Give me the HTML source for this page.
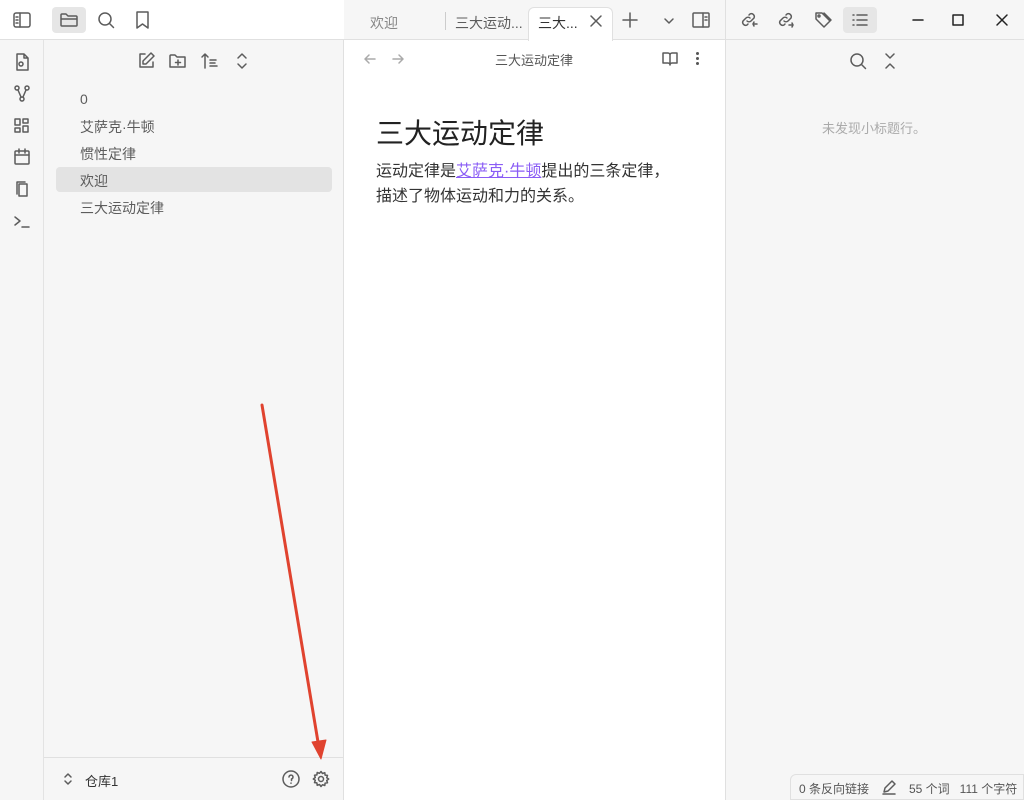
<!DOCTYPE html>
<html><head><meta charset="utf-8"><style>
*{box-sizing:border-box;margin:0;padding:0}
body{width:1024px;height:800px;overflow:hidden;position:relative;background:#fff;font-family:"Liberation Sans","Noto Sans CJK SC",sans-serif;color:#222}
.abs{position:absolute}
svg{position:absolute;fill:none;stroke:#5c5c5c;stroke-width:1.5;stroke-linecap:round;stroke-linejoin:round}
.t{font-size:14px;color:#5c5c5c;position:absolute}
</style></head><body>
<div class="abs" style="left:0;top:0;width:344px;height:40px;background:#fff;border-bottom:1px solid #e0e0e0"></div>
<div class="abs" style="left:0;top:40px;width:44px;height:760px;background:#f6f6f6;border-right:1px solid #e3e3e3"></div>
<div class="abs" style="left:44px;top:40px;width:300px;height:760px;background:#f6f6f6;border-right:1px solid #e0e0e0"></div>
<div class="abs" style="left:344px;top:0;width:381px;height:40px;background:#f6f6f6;border-bottom:1px solid #e0e0e0"></div>
<div class="abs" style="left:725px;top:0;width:299px;height:40px;background:#f6f6f6;border-bottom:1px solid #e0e0e0;border-left:1px solid #e0e0e0"></div>
<div class="abs" style="left:725px;top:40px;width:299px;height:760px;background:#f6f6f6;border-left:1px solid #e0e0e0"></div>
<div class="abs" style="left:44px;top:757px;width:300px;height:1px;background:#e0e0e0"></div>

<svg style="left:12px;top:11px" width="20" height="18" viewBox="0 0 20 18"><rect x="2" y="2" width="16" height="14" rx="2"/><path d="M8 2v14M4 6h2M4 9h2M4 12h2"/></svg>
<div class="abs" style="left:52px;top:7px;width:34px;height:26px;background:#e6e6e6;border-radius:4px"></div>
<svg style="left:59px;top:11px" width="20" height="18" viewBox="0 0 20 18"><path d="M2 4a1 1 0 0 1 1-1h4l2 2h8a1 1 0 0 1 1 1v8a1 1 0 0 1-1 1H3a1 1 0 0 1-1-1zM2 8h16"/></svg>
<svg style="left:96px;top:10px" width="20" height="20" viewBox="0 0 20 20"><circle cx="9" cy="9" r="6"/><path d="M13.5 13.5l4 4"/></svg>
<svg style="left:134px;top:10px" width="18" height="20" viewBox="0 0 18 20"><path d="M3 2h11v16l-5.5-4L3 18z"/></svg>

<svg style="left:12px;top:52px" width="20" height="20" viewBox="0 0 20 20"><path d="M5 2h7l4 4v12H5zM12 2v4h4"/><circle cx="9" cy="12" r="2"/></svg>
<svg style="left:12px;top:84px" width="20" height="20" viewBox="0 0 20 20"><circle cx="5" cy="4" r="2"/><circle cx="15" cy="4" r="2"/><circle cx="10" cy="15" r="2"/><path d="M6 6l3 7M14 6l-3 7"/></svg>
<svg style="left:12px;top:116px" width="20" height="20" viewBox="0 0 20 20"><rect x="3" y="3" width="5" height="6"/><rect x="11" y="3" width="5" height="4"/><rect x="3" y="12" width="5" height="4"/><rect x="11" y="10" width="5" height="6"/></svg>
<svg style="left:12px;top:147px" width="20" height="20" viewBox="0 0 20 20"><rect x="3" y="4" width="14" height="13" rx="1"/><path d="M3 8h14M7 2v4M13 2v4"/></svg>
<svg style="left:12px;top:179px" width="20" height="20" viewBox="0 0 20 20"><path d="M7 5h8v12H7zM5 15V3h8"/></svg>
<svg style="left:12px;top:211px" width="20" height="20" viewBox="0 0 20 20"><path d="M3 6l5 4-5 4M10 16h7"/></svg>

<svg style="left:136px;top:51px" width="20" height="20" viewBox="0 0 20 20"><path d="M9 3H4v13h13v-5M15 2l3 3-8 8H7v-3z"/></svg>
<svg style="left:168px;top:51px" width="20" height="20" viewBox="0 0 20 20"><path d="M2 5a1 1 0 0 1 1-1h4l2 2h8v10H2zM10 9v5M7.5 11.5h5"/></svg>
<svg style="left:200px;top:51px" width="20" height="20" viewBox="0 0 20 20"><path d="M5 17V3M2 6l3-3 3 3M10 9h6M10 12h5M10 15h7"/></svg>
<svg style="left:232px;top:51px" width="20" height="20" viewBox="0 0 20 20"><path d="M6 7l4-4 4 4M6 13l4 4 4-4"/></svg>

<div class="abs" style="left:56px;top:167px;width:276px;height:25px;background:#e3e3e3;border-radius:4px"></div>
<div class="t" style="left:80px;top:91px">0</div>
<div class="t" style="left:80px;top:117px">艾萨克·牛顿</div>
<div class="t" style="left:80px;top:144px">惯性定律</div>
<div class="t" style="left:80px;top:171px">欢迎</div>
<div class="t" style="left:80px;top:198px">三大运动定律</div>

<svg style="left:60px;top:771px" width="16" height="16" viewBox="0 0 16 16"><path d="M5 6l3-3 3 3M5 10l3 3 3-3"/></svg>
<div class="abs" style="left:85px;top:771px;font-size:13px;color:#333">仓库1</div>
<svg style="left:281px;top:769px" width="20" height="20" viewBox="0 0 20 20"><circle cx="10" cy="10" r="8"/><path d="M8 8a2 2 0 1 1 2.5 2v1.5M10 14v.2"/></svg>
<svg style="left:311px;top:769px" width="20" height="20" viewBox="0 0 20 20"><circle cx="10" cy="10" r="2.5"/><path d="M10 2.5l1.5 2 2.3-.8.3 2.4 2.4.3-.8 2.3 2 1.3-2 1.5.8 2.3-2.4.3-.3 2.4-2.3-.8L10 17.5l-1.5-2-2.3.8-.3-2.4-2.4-.3.8-2.3-2-1.300 2-1.5-.8-2.3 2.4-.3.3-2.4 2.3.8z"/></svg>

<div class="t" style="left:370px;top:13px;color:#888">欢迎</div>
<div class="abs" style="left:445px;top:12px;width:1px;height:18px;background:#ccc"></div>
<div class="t" style="left:455px;top:13px">三大运动...</div>
<div class="abs" style="left:528px;top:7px;width:85px;height:34px;background:#fff;border:1px solid #e0e0e0;border-bottom:none;border-radius:6px 6px 0 0"></div>
<div class="t" style="left:538px;top:13px;color:#333">三大...</div>
<svg style="left:588px;top:13px" width="16" height="16" viewBox="0 0 16 16"><path d="M3 3l10 10M13 3L3 13"/></svg>
<svg style="left:621px;top:11px" width="18" height="18" viewBox="0 0 18 18"><path d="M9 2v14M2 9h14"/></svg>
<svg style="left:661px;top:13px" width="16" height="16" viewBox="0 0 16 16"><path d="M4 6l4 4 4-4"/></svg>
<svg style="left:691px;top:10px" width="20" height="20" viewBox="0 0 20 20"><rect x="2" y="3" width="16" height="14" rx="1"/><path d="M12 3v14M14 7h2M14 10h2"/></svg>

<svg style="left:739px;top:10px" width="20" height="20" viewBox="0 0 20 20"><path d="M8 11a3 3 0 0 0 4 0l3-3a3 3 0 0 0-4-4l-1 1M11 8a3 3 0 0 0-4 0l-3 3a3 3 0 0 0 4 4l1-1M14 14l4 0M15 12l-1 2 1 2"/></svg>
<svg style="left:776px;top:10px" width="20" height="20" viewBox="0 0 20 20"><path d="M8 11a3 3 0 0 0 4 0l3-3a3 3 0 0 0-4-4l-1 1M11 8a3 3 0 0 0-4 0l-3 3a3 3 0 0 0 4 4l1-1M13 15h4M16 13l1 2-1 2"/></svg>
<svg style="left:813px;top:10px" width="20" height="20" viewBox="0 0 20 20"><path d="M3 3h6l8 8-6 6-8-8zM11 3l7 7-6 6"/><circle cx="6" cy="6" r="1"/></svg>
<div class="abs" style="left:843px;top:7px;width:34px;height:26px;background:#e6e6e6;border-radius:4px"></div>
<svg style="left:850px;top:10px" width="20" height="20" viewBox="0 0 20 20"><path d="M3 5h1M3 10h1M3 15h1M7 5h10M7 10h10M7 15h10"/></svg>
<svg style="left:910px;top:12px;stroke:#222" width="16" height="16" viewBox="0 0 16 16"><path d="M3 8h10"/></svg>
<svg style="left:950px;top:12px;stroke:#222" width="16" height="16" viewBox="0 0 16 16"><rect x="3" y="3" width="10" height="10"/></svg>
<svg style="left:994px;top:12px;stroke:#222" width="16" height="16" viewBox="0 0 16 16"><path d="M3 3l10 10M13 3L3 13"/></svg>

<svg style="left:362px;top:51px;stroke:#aaa" width="16" height="16" viewBox="0 0 16 16"><path d="M13 8H3M7 4L3 8l4 4"/></svg>
<svg style="left:390px;top:51px;stroke:#aaa" width="16" height="16" viewBox="0 0 16 16"><path d="M3 8h10M9 4l4 4-4 4"/></svg>
<div class="abs" style="left:495px;top:50px;font-size:13px;color:#555">三大运动定律</div>
<svg style="left:661px;top:50px" width="18" height="18" viewBox="0 0 18 18"><path d="M2 3h5a2 2 0 0 1 2 2v10a2 2 0 0 0-2-2H2zM16 3h-5a2 2 0 0 0-2 2v10a2 2 0 0 1 2-2h5z"/></svg>
<div class="abs" style="left:696px;top:52px;width:3px;height:3px;border-radius:2px;background:#555;box-shadow:0 5px 0 #555,0 10px 0 #555"></div>

<div class="abs" style="left:376px;top:112px;font-size:28px;color:#222;font-weight:400">三大运动定律</div>
<div class="abs" style="left:376px;top:159px;font-size:16px;line-height:25px;color:#333;width:300px">运动定律是<span style="color:#8a5cf5;text-decoration:underline">艾萨克·牛顿</span>提出的三条定律，<br>描述了物体运动和力的关系。</div>

<svg style="left:848px;top:51px" width="20" height="20" viewBox="0 0 20 20"><circle cx="9" cy="9" r="6"/><path d="M13.5 13.5l4 4"/></svg>
<svg style="left:882px;top:51px" width="16" height="20" viewBox="0 0 16 20"><path d="M4 3l4 4 4-4M4 17l4-4 4 4"/></svg>
<div class="abs" style="left:822px;top:118px;font-size:13px;color:#aaa">未发现小标题行。</div>

<div class="abs" style="left:790px;top:774px;width:234px;height:26px;background:#f6f6f6;border:1px solid #e0e0e0;border-radius:6px 0 0 0"></div>
<div class="abs" style="left:799px;top:780px;font-size:12px;color:#555">0 条反向链接</div>
<svg style="left:881px;top:779px" width="16" height="16" viewBox="0 0 16 16"><path d="M3 13l1-4 7-7 3 3-7 7zM2 15h12"/></svg>
<div class="abs" style="left:909px;top:780px;font-size:12px;color:#555">55 个词&nbsp;&nbsp;&nbsp;111 个字符</div>

<svg style="left:0;top:0;stroke:#e0432f;stroke-width:3" width="1024" height="800" viewBox="0 0 1024 800"><path d="M262 405L319 748"/><path d="M312 742l9 17 5-19z" style="fill:#e0432f;stroke-width:1"/></svg>
</body></html>
